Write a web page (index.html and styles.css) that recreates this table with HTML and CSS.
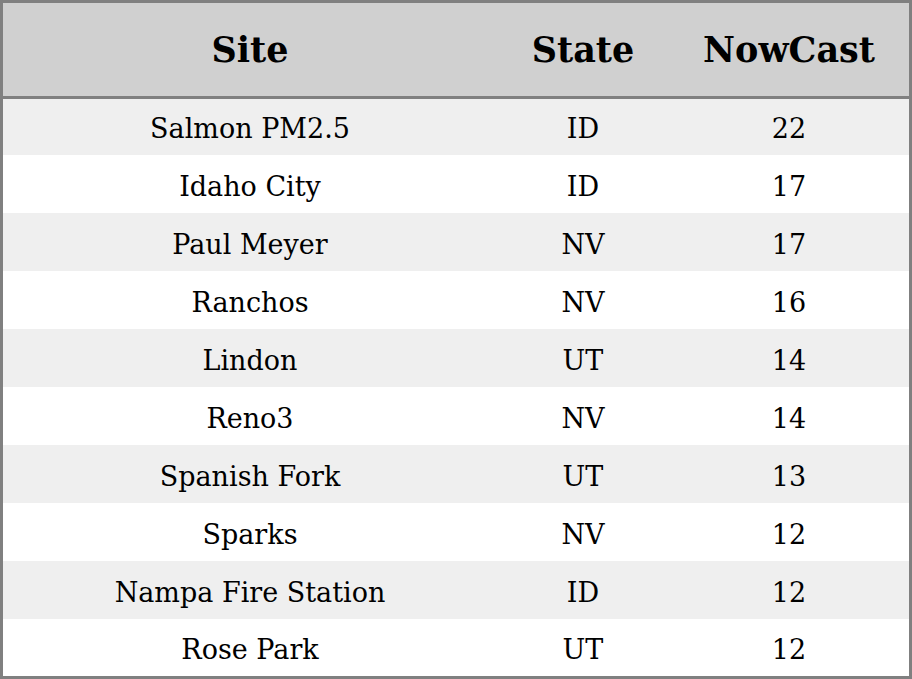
FILE: index.html
```html
<!DOCTYPE html>
<html>
<head>
<meta charset="utf-8">
<link rel="stylesheet" href="styles.css">
</head>
<body>
<table class="aq">
<thead>
<tr><th class="c-site">Site</th><th class="c-state">State</th><th class="c-now">NowCast</th></tr>
</thead>
<tbody>
<tr class="first"><td>Salmon PM2.5</td><td>ID</td><td>22</td></tr>
<tr><td>Idaho City</td><td>ID</td><td>17</td></tr>
<tr><td>Paul Meyer</td><td>NV</td><td>17</td></tr>
<tr><td>Ranchos</td><td>NV</td><td>16</td></tr>
<tr><td>Lindon</td><td>UT</td><td>14</td></tr>
<tr><td>Reno3</td><td>NV</td><td>14</td></tr>
<tr><td>Spanish Fork</td><td>UT</td><td>13</td></tr>
<tr><td>Sparks</td><td>NV</td><td>12</td></tr>
<tr><td>Nampa Fire Station</td><td>ID</td><td>12</td></tr>
<tr class="last"><td>Rose Park</td><td>UT</td><td>12</td></tr>
</tbody>
</table>
</body>
</html>
```
FILE: styles.css
```css
html, body {
  margin: 0;
  padding: 0;
  background: #ffffff;
}
.aq {
  width: 912px;
  border-collapse: separate;
  border-spacing: 0;
  border: 3px solid #808080;
  font-family: "DejaVu Serif", serif;
  color: #000;
  table-layout: fixed;
}
.aq th,
.aq td {
  box-sizing: border-box;
  padding: 0;
  text-align: center;
  vertical-align: middle;
}
.aq th {
  background: #d0d0d0;
  font-weight: bold;
  font-size: 35px;
  height: 96px;
  border-bottom: 3px solid #808080;
}
.aq td {
  font-size: 27px;
  height: 58px;
  padding-top: 4px;
}
.aq tr.first td { height: 56px; padding-top: 2px; }
.aq tr.last td { height: 57px; padding-top: 3px; }
.aq tbody tr:nth-child(odd) td {
  background: #efefef;
}
.c-site { width: 494px; }
.c-state { width: 172px; }
.c-now { width: 240px; }
```
